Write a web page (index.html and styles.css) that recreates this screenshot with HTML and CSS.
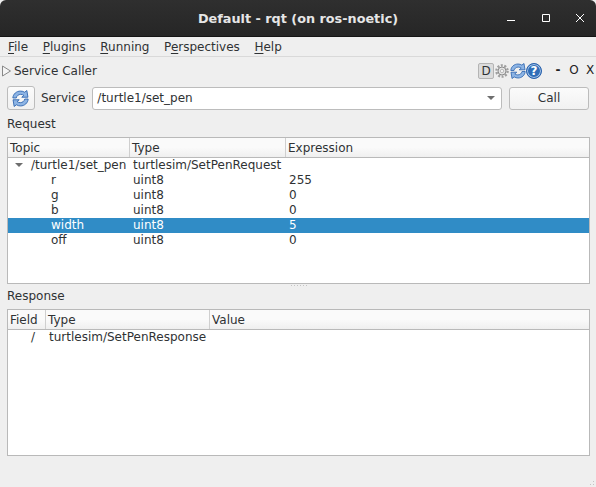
FILE: index.html
```html
<!doctype html>
<html>
<head>
	<meta charset="utf-8">
	<title>Default - rqt (on ros-noetic)</title>
	<link rel="stylesheet" href="styles.css">
</head>
<body>
	<!-- 标题栏 -->
	<div class="titlebar">
		<span class="title">Default - rqt (on ros-noetic)</span>
		<div class="winbtns">
			<svg width="12" height="12" viewBox="0 0 12 12"><path d="M1 8.500h8" stroke="#fff" stroke-width="1"/></svg>
			<svg width="12" height="12" viewBox="0 0 12 12"><path d="M2.500 2.500h7v7h-7z" fill="none" stroke="#fff" stroke-width="1"/></svg>
			<svg width="12" height="12" viewBox="0 0 12 12"><path d="M2 2l8 8M10 2l-8 8" stroke="#fff" stroke-width="1"/></svg>
		</div>
	</div>
	<!-- 菜单 -->
	<div class="menubar">
		<span><u>F</u>ile</span>
		<span><u>P</u>lugins</span>
		<span><u>R</u>unning</span>
		<span>P<u>e</u>rspectives</span>
		<span><u>H</u>elp</span>
	</div>
	<!-- 插件标题 -->
	<div class="dockbar">
		<svg class="tri" width="11" height="12" viewBox="0 0 11 12"><path d="M1.500 1v10l8-5z" fill="#f4f4f4" stroke="#888"/></svg>
		<span class="dockname">Service Caller</span>
		<div class="dockicons">
			<span class="dbtn">D</span>
			<svg width="16" height="16" viewBox="0 0 16 16"><circle cx="8" cy="8" r="5.600" fill="none" stroke="#a0a0a0" stroke-width="2.400" stroke-dasharray="2 1.500"/><circle cx="8" cy="8" r="4" fill="#e4e4e4" stroke="#8c8c8c"/><circle cx="8" cy="8" r="1.700" fill="#f2f2f2" stroke="#a8a8a8" stroke-width=".7"/></svg>
			<svg width="16" height="16" viewBox="0 0 16 16"><g fill="#8db4e4" stroke="#2a62ad" stroke-width=".8"><path d="M.8 7.500C1 3.800 4.200 1 8 1c1.500 0 2.800.4 3.800 1.100L14 .5l1 6.300H9.200l2-1.700C10.400 4.500 9.300 4.100 8.200 4.100c-2.100 0-3.800 1.400-4.200 3.400z"/><path d="M15.200 8.500C15 12.200 11.800 15 8 15c-1.500 0-2.800-.4-3.800-1.100L2 15.500 1 9.200h5.800l-2 1.700c.8.600 1.900 1 3 1 2.100 0 3.800-1.400 4.200-3.400z"/></g></svg>
			<span class="help">?</span>
			<span class="dockctl dash">-</span>
			<span class="dockctl">O</span>
			<span class="dockctl">X</span>
		</div>
	</div>
	<!-- 服务选择 -->
	<div class="toolrow">
		<button class="btn refresh">
			<svg width="17" height="17" viewBox="0 0 16 16"><g fill="#8db4e4" stroke="#2a62ad" stroke-width=".8"><path d="M.8 7.500C1 3.800 4.200 1 8 1c1.500 0 2.800.4 3.800 1.100L14 .5l1 6.300H9.200l2-1.700C10.400 4.500 9.300 4.100 8.200 4.100c-2.100 0-3.800 1.400-4.200 3.400z"/><path d="M15.200 8.500C15 12.200 11.800 15 8 15c-1.500 0-2.800-.4-3.800-1.100L2 15.500 1 9.200h5.800l-2 1.700c.8.600 1.900 1 3 1 2.100 0 3.800-1.400 4.200-3.400z"/></g></svg>
		</button>
		<span class="svc">Service</span>
		<div class="combo"><span>/turtle1/set_pen</span><i class="arrow"></i></div>
		<button class="btn call">Call</button>
	</div>
	<div class="label req">Request</div>
	<!-- 请求表格 -->
	<div class="table">
		<div class="thead cols-req">
			<div>Topic</div><div>Type</div><div>Expression</div>
		</div>
		<div class="row cols-req">
			<div class="root"><i class="arrow small"></i>/turtle1/set_pen</div><div>turtlesim/SetPenRequest</div><div></div>
		</div>
		<div class="row cols-req"><div class="child">r</div><div>uint8</div><div>255</div></div>
		<div class="row cols-req"><div class="child">g</div><div>uint8</div><div>0</div></div>
		<div class="row cols-req"><div class="child">b</div><div>uint8</div><div>0</div></div>
		<div class="row cols-req selected"><div class="child">width</div><div>uint8</div><div>5</div></div>
		<div class="row cols-req"><div class="child">off</div><div>uint8</div><div>0</div></div>
	</div>
	<div class="splitter"></div>
	<div class="label">Response</div>
	<!-- 响应表格 -->
	<div class="table">
		<div class="thead cols-res">
			<div>Field</div><div>Type</div><div>Value</div>
		</div>
		<div class="row cols-res">
			<div class="slash">/</div><div>turtlesim/SetPenResponse</div><div></div>
		</div>
	</div>
	<div class="grip"></div>
</body>
</html>
```

FILE: styles.css
```css
html,body{margin:0;padding:0;}
body{
	width:596px;
	height:487px;
	overflow:hidden;
	position:relative;
	background-color:#efefef;
	color:#2f3234;
	font-family:"DejaVu Sans",sans-serif;
	font-size:12px;
	line-height:15px;
}
u{text-decoration-thickness:1px;text-underline-offset:2px;}
/* 标题栏 */
.titlebar{
	height:36px;
	background:linear-gradient(#2f2f2f,#262626);
	border-bottom:1px solid #151515;
	border-radius:6px 6px 0 0;
	display:flex;
	align-items:center;
	justify-content:center;
}
.title{
	color:#e6e6e6;
	font-weight:bold;
	font-size:12.800px;
}
.winbtns{
	position:absolute;
	top:12px;
	right:10px;
	display:flex;
	gap:22px;
}
/* 菜单 */
.menubar{
	height:20px;
	padding:1px 0 0 8px;
	box-sizing:border-box;
	border-bottom:1px solid #d9d9d9;
	display:flex;
	align-items:center;
	gap:14.600px;
}
/* 插件标题 */
.dockbar{
	height:26px;
	box-sizing:border-box;
	display:flex;
	align-items:center;
}
.tri{margin:2px 0 0 1px;}
.dockname{margin:2px 0 0 2px;}
.dockicons{
	margin-left:auto;
	margin-right:-2px;
	margin-top:1px;
	display:flex;
	align-items:center;
}
.dbtn{
	width:16px;
	height:16px;
	box-sizing:border-box;
	background-color:#dcdcdc;
	border:1px solid #b4b4b4;
	border-radius:2px;
	text-align:center;
	line-height:14px;
}
.help{
	width:16px;
	height:16px;
	box-sizing:border-box;
	border:1px solid #2a62ad;
	box-shadow:inset 0 0 0 1px #a9c6e8;
	border-radius:50%;
	background-color:#2f6db8;
	color:#fff;
	font-weight:bold;
	text-align:center;
	line-height:14px;
}
.dockctl{
	color:#222;
	width:16px;
	text-align:center;
}
.dash{margin-left:8px;font-weight:bold;}
/* 服务选择 */
.toolrow{
	height:24px;
	margin-top:3px;
	display:flex;
	align-items:center;
	padding:0 7px;
}
.btn{
	font:inherit;
	color:inherit;
	background:linear-gradient(#fbfbfb,#f1f1f1);
	border:1px solid #bcbcbc;
	border-radius:3px;
	padding:0;
	height:23px;
}
.refresh{
	width:28px;
	height:24px;
	display:flex;
	align-items:center;
	justify-content:center;
}
.svc{margin-left:6px;}
.combo{
	margin-left:7px;
	width:410px;
	height:23px;
	box-sizing:border-box;
	background-color:#fff;
	border:1px solid #bcbcbc;
	border-radius:3px;
	display:flex;
	align-items:center;
	justify-content:space-between;
	padding:0 6px 0 4px;
}
.arrow{
	width:0;
	height:0;
	border-left:4px solid transparent;
	border-right:4px solid transparent;
	border-top:4px solid #6e6e6e;
}
.call{
	margin-left:7px;
	width:80px;
}
.label{
	height:15px;
	margin-top:5px;
	padding-left:7px;
}
.req{margin-top:7px;}
/* 表格 */
.table{
	margin:5px 6px 0 7px;
	height:147px;
	border:1px solid #b9b9b9;
	background-color:#fff;
	box-sizing:border-box;
	overflow:hidden;
}
.thead{
	height:20px;
	box-sizing:border-box;
	background:linear-gradient(#fafafa 50%,#efefef);
	border-bottom:1px solid #b9b9b9;
	display:grid;
	line-height:20px;
}
.thead div{
	border-right:1px solid #cfcfcf;
	padding-left:2px;
	height:19px;
}
.thead div:last-child{border-right:0;}
.row{
	display:grid;
	height:15px;
}
.row div{
	padding-left:3px;
	white-space:nowrap;
}
.cols-req{grid-template-columns:122px 156px 1fr;}
.cols-res{grid-template-columns:38px 164px 1fr;}
.row .root{position:relative;padding-left:23px;}
.small{
	position:absolute;
	left:7px;
	top:5px;
}
.row .child{padding-left:43px;}
.row .slash{padding-left:23px;}
.selected{background-color:#308cc6;color:#fff;}
/* 分隔条手柄，压在两个表格之间 */
.splitter{
	position:absolute;
	left:291px;
	top:285px;
	width:17px;
	height:1px;
	background-image:repeating-linear-gradient(90deg,#c4c4c4 0 1px,transparent 1px 3px);
}
.grip{
	position:absolute;
	right:0;
	bottom:0;
	width:10px;
	height:10px;
	background-image:radial-gradient(circle,#c4c4c4 0.7px,transparent 0.8px);
	background-size:3px 3px;
	clip-path:polygon(100% 0,100% 100%,0 100%);
}
```
